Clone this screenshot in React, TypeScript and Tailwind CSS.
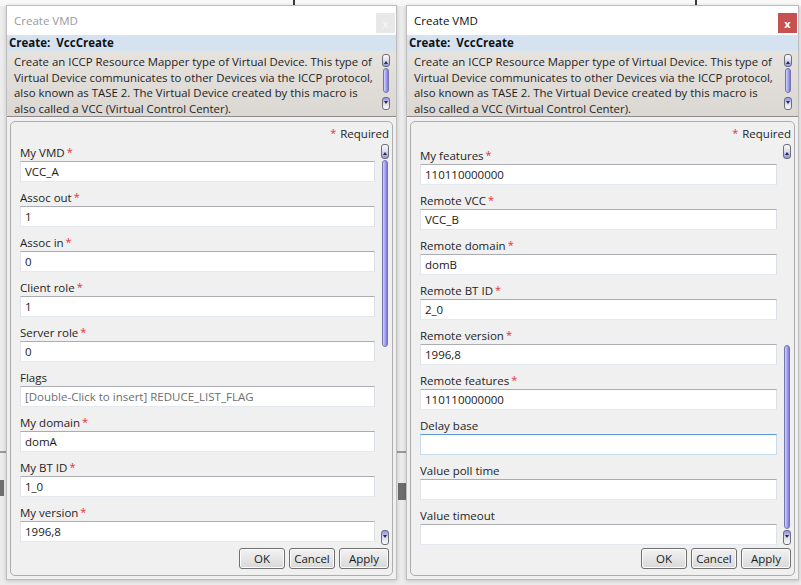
import React from "react";

const F = "font-['Segoe_UI','Open_Sans',sans-serif]";

type Field = { label: string; value: string; req: boolean; gray?: boolean; focus?: boolean };

const leftFields: Field[] = [
  { label: "My VMD", value: "VCC_A", req: true },
  { label: "Assoc out", value: "1", req: true },
  { label: "Assoc in", value: "0", req: true },
  { label: "Client role", value: "1", req: true },
  { label: "Server role", value: "0", req: true },
  { label: "Flags", value: "[Double-Click to insert] REDUCE_LIST_FLAG", req: false, gray: true },
  { label: "My domain", value: "domA", req: true },
  { label: "My BT ID", value: "1_0", req: true },
  { label: "My version", value: "1996,8", req: true },
];

const rightFields: Field[] = [
  { label: "My features", value: "110110000000", req: true },
  { label: "Remote VCC", value: "VCC_B", req: true },
  { label: "Remote domain", value: "domB", req: true },
  { label: "Remote BT ID", value: "2_0", req: true },
  { label: "Remote version", value: "1996,8", req: true },
  { label: "Remote features", value: "110110000000", req: true },
  { label: "Delay base", value: "", req: false, focus: true },
  { label: "Value poll time", value: "", req: false },
  { label: "Value timeout", value: "", req: false },
];

function SBtn({ up, h }: { up: boolean; h: string }) {
  return (
    <div
      className={
        "w-[8px] rounded-[3px] border border-[#6e6e78] flex items-center justify-center shrink-0 " +
        h +
        (up
          ? " bg-gradient-to-b from-[#fbfbfb] via-[#dcdcec] to-[#8f8fe6]"
          : " bg-gradient-to-b from-[#8f8fe6] via-[#dcdcec] to-[#fbfbfb]")
      }
    >
      {up ? (
        <div className="w-0 h-0 border-l-[2px] border-r-[2px] border-b-[3px] border-l-transparent border-r-transparent border-b-[#2a2a40] mt-[3px]" />
      ) : (
        <div className="w-0 h-0 border-l-[2px] border-r-[2px] border-t-[3px] border-l-transparent border-r-transparent border-t-[#2a2a40] mb-[3px]" />
      )}
    </div>
  );
}

function Thumb({ h }: { h: string }) {
  return (
    <div
      className={
        "w-[6px] mx-[1px] rounded-[3px] border border-[#7474a8] bg-gradient-to-r from-[#d4d4ff] via-[#a4a4f4] to-[#7a7ad8] shrink-0 " + h
      }
    />
  );
}

function Input({ f }: { f: Field }) {
  return (
    <div
      className={
        "h-[21px] bg-white border flex items-center px-[4px] text-[11.5px] whitespace-nowrap overflow-hidden " +
        (f.focus
          ? "border-[#c5daed] border-t-[#5d9ad8]"
          : "border-[#e3e9ef] border-t-[#abadb3] border-l-[#e2e3ea] border-r-[#dbdfe6]") +
        (f.gray ? " text-[#6d6d6d]" : " text-[#1a1a1a]")
      }
    >
      {f.value}
    </div>
  );
}

function FieldRow({ f }: { f: Field }) {
  return (
    <div className="mb-[7px]">
      <div className="h-[17px] leading-[17px] text-[11.5px] text-[#1e1e1e] flex items-center whitespace-nowrap">
        <span>{f.label}</span>
        {f.req && <span className="text-[#e8303a] text-[11px] ml-[2px] -mt-[2px]">*</span>}
      </div>
      <Input f={f} />
    </div>
  );
}

function Btn({ label, w }: { label: string; w: string }) {
  return (
    <div
      className={
        "h-[21px] rounded-[3px] border border-[#707070] bg-gradient-to-b from-[#f2f2f2] via-[#e6e6e6] to-[#d8d8d8] flex items-center justify-center text-[11.5px] text-[#1a1a1a] shadow-[inset_0_0_0_1px_#fcfcfc] " +
        w
      }
    >
      {label}
    </div>
  );
}

function Window({ active, w, fields, thumbTop }: { active: boolean; w: string; fields: Field[]; thumbTop: boolean }) {
  return (
    <div className={"relative flex flex-col h-[575px] bg-[#f0f0f0] border border-[#bdbdbd] shadow-[0_1px_4px_rgba(0,0,0,0.18)] shrink-0 " + w}>
      <div className="h-[29px] bg-white flex items-center pl-[7px] pt-[1px] shrink-0">
        <span className={"text-[11.5px] " + (active ? "text-[#111]" : "text-[#9a9a9a]")}>Create VMD</span>
      </div>
      <div
        className={
          "absolute top-[7px] right-[1px] w-[19px] h-[20px] flex items-center justify-center text-[11px] leading-none " +
          (active ? "bg-[#c75050] text-white font-bold" : "bg-[#e8e8e8] text-[#f8f8f8]")
        }
      >
        x
      </div>
      <div className="h-[16px] bg-[#d5e3f1] flex items-center pl-[2px] shrink-0">
        <span className="text-[11.5px] font-bold text-[#111] whitespace-pre">Create:  VccCreate</span>
      </div>
      <div className="h-[65px] bg-gradient-to-b from-[#e6e3df] to-[#dbd7d2] flex shrink-0">
        <div className="flex-1 min-w-0 overflow-hidden pl-[7px] pt-[3px] text-[11.4px] leading-[15.5px] text-[#1e1e1e]">
          <div className="whitespace-nowrap">Create an ICCP Resource Mapper type of Virtual Device. This type of</div>
          <div className="whitespace-nowrap">Virtual Device communicates to other Devices via the ICCP protocol,</div>
          <div className="whitespace-nowrap">also known as TASE 2. The Virtual Device created by this macro is</div>
          <div className="whitespace-nowrap">also called a VCC (Virtual Control Center).</div>
        </div>
        <div className="flex flex-col pt-[3px] pr-[6px] pl-[2px] items-end shrink-0">
          <SBtn up h="h-[13px]" />
          <div className="h-[1px]" />
          <Thumb h="h-[25px]" />
          <div className="h-[4px]" />
          <SBtn up={false} h="h-[13px]" />
        </div>
      </div>
      <div className="h-[2px] border-t border-[#8a8a8a] bg-[#f4f4f4] shrink-0" />
      <div className="flex-1 px-[3px] pt-[3px] pb-[3px] flex">
        <div className="flex-1 flex flex-col rounded-[5px] border border-[#adadad] bg-[#f0f0f0] pt-[4px] pb-[5px] pl-[9px] pr-[2px]">
          <div className="h-[16px] flex items-center justify-end text-[11.5px] text-[#1e1e1e] pr-[1px]">
            <span className="text-[#e8303a] text-[11px] mr-[4px] -mt-[2px]">*</span>
            <span>Required</span>
          </div>
          <div className="h-[2px]" />
          <div className="h-[401px] flex">
            <div className={"flex-1 min-w-0 overflow-hidden " + (thumbTop ? "" : "pt-[3px]")}>
              {fields.map((f) => (
                <FieldRow key={f.label} f={f} />
              ))}
            </div>
            <div className="w-[6px]" />
            <div className="flex flex-col w-[8px]">
              <SBtn up h="h-[15px]" />
              <div className="flex-1 flex flex-col py-[1px]">
                {thumbTop ? (
                  <>
                    <Thumb h="h-[187px]" />
                    <div className="flex-1" />
                  </>
                ) : (
                  <>
                    <div className="flex-1" />
                    <Thumb h="h-[184px]" />
                  </>
                )}
              </div>
              <SBtn up={false} h="h-[15px]" />
            </div>
            <div className="w-[1px]" />
          </div>
          <div className="h-[3px]" />
          <div className="flex justify-end gap-[4px] pr-[1px]">
            <Btn label="OK" w="w-[46px]" />
            <Btn label="Cancel" w="w-[46px]" />
            <Btn label="Apply" w="w-[50px]" />
          </div>
        </div>
      </div>
    </div>
  );
}

export default function App() {
  return (
    <div className={"relative w-[801px] h-[585px] overflow-hidden bg-[#ececec] " + F}>
      <div className="absolute left-0 top-0 w-[801px] h-[6px] bg-[#f8f8f8]" />
      <div className="absolute left-[293px] top-0 w-[2px] h-[6px] bg-[#3a3a3a]" />
      <div className="absolute left-[695px] top-0 w-[2px] h-[6px] bg-[#3a3a3a]" />
      <div className="absolute left-[397px] top-[451px] w-[9px] h-[2px] border-t border-b border-[#9a9a9a]" />
      <div className="absolute left-[398px] top-[483px] w-[8px] h-[17px] bg-[#6e6e6e]" />
      <div className="absolute left-0 top-[480px] w-[4px] h-[16px] bg-[#6e6e6e]" />
      <div className="absolute left-0 top-[451px] w-[6px] h-[2px] border-t border-b border-[#9a9a9a]" />
      <div className="relative flex pt-[5px] pl-[6px] gap-[9px]">
        <Window active={false} w="w-[391px]" fields={leftFields} thumbTop />
        <Window active w="w-[393px]" fields={rightFields} thumbTop={false} />
      </div>
    </div>
  );
}
